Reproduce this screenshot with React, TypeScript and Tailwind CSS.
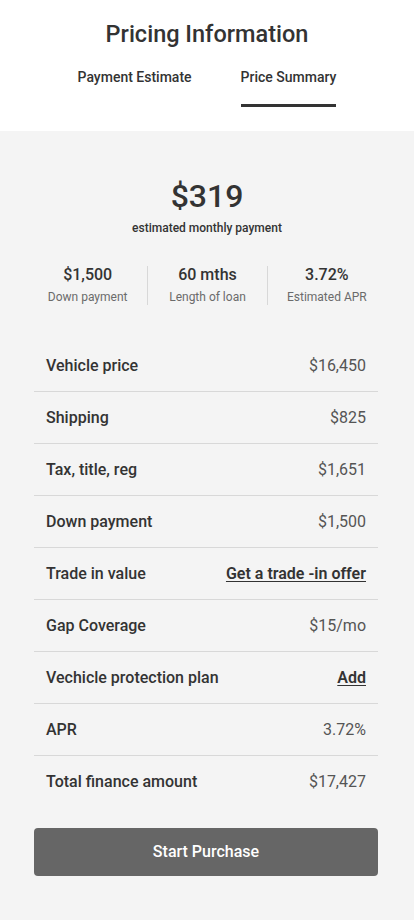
const rows: { label: string; value: string; link?: boolean }[] = [
  { label: "Vehicle price", value: "$16,450" },
  { label: "Shipping", value: "$825" },
  { label: "Tax, title, reg", value: "$1,651" },
  { label: "Down payment", value: "$1,500" },
  { label: "Trade in value", value: "Get a trade -in offer", link: true },
  { label: "Gap Coverage", value: "$15/mo" },
  { label: "Vechicle protection plan", value: "Add", link: true },
  { label: "APR", value: "3.72%" },
  { label: "Total finance amount", value: "$17,427" },
]

const stats = [
  { value: "$1,500", label: "Down payment" },
  { value: "60 mths", label: "Length of loan" },
  { value: "3.72%", label: "Estimated APR" },
]

export default function App() {
  return (
    <div className="w-[414px] min-h-[920px] bg-[#f4f4f4] font-['Roboto',sans-serif] text-[#333]">
      <header className="bg-white pt-[18px] pb-[24px]">
        <h1 className="text-center text-[23.5px] leading-8 font-medium">Pricing Information</h1>
        <div className="mt-[17px] flex justify-center gap-[49px] text-[14px] leading-5 font-medium">
          <button className="pb-[17px] border-b-[3px] border-transparent">Payment Estimate</button>
          <button className="pb-[17px] border-b-[3px] border-[#333]">Price Summary</button>
        </div>
      </header>

      <section className="pt-[45px] pb-[44px]">
        <div className="text-center">
          <div className="text-[32px] leading-10 font-medium">$319</div>
          <div className="mt-1 text-[12px] leading-4 font-medium">estimated monthly payment</div>
        </div>

        <div className="mt-[30px] mx-[28px] grid grid-cols-3">
          {stats.map((s, i) => (
            <div key={s.label} className={`text-center ${i > 0 ? "border-l border-[#d8d8d8]" : ""}`}>
              <div className="text-[16px] leading-[18px] font-medium">{s.value}</div>
              <div className="mt-[5px] text-[12px] leading-4 text-[#6b6b6b]">{s.label}</div>
            </div>
          ))}
        </div>

        <div className="mt-[35px] ml-[34px] w-[344px]">
          {rows.map((r, i) => (
            <div
              key={r.label}
              className={`flex h-[52px] items-center justify-between px-3 ${i < rows.length - 1 ? "border-b border-[#d8d8d8]" : ""}`}
            >
              <span className="text-[16px] font-medium">{r.label}</span>
              {r.link ? (
                <a className="text-[16px] font-semibold underline underline-offset-2">{r.value}</a>
              ) : (
                <span className="text-[16px] text-[#555]">{r.value}</span>
              )}
            </div>
          ))}
        </div>

        <div className="mt-[20px] ml-[34px] w-[344px]">
          <button className="w-full h-12 rounded bg-[#666] text-white text-[16px] font-medium">Start Purchase</button>
        </div>
      </section>
    </div>
  )
}
